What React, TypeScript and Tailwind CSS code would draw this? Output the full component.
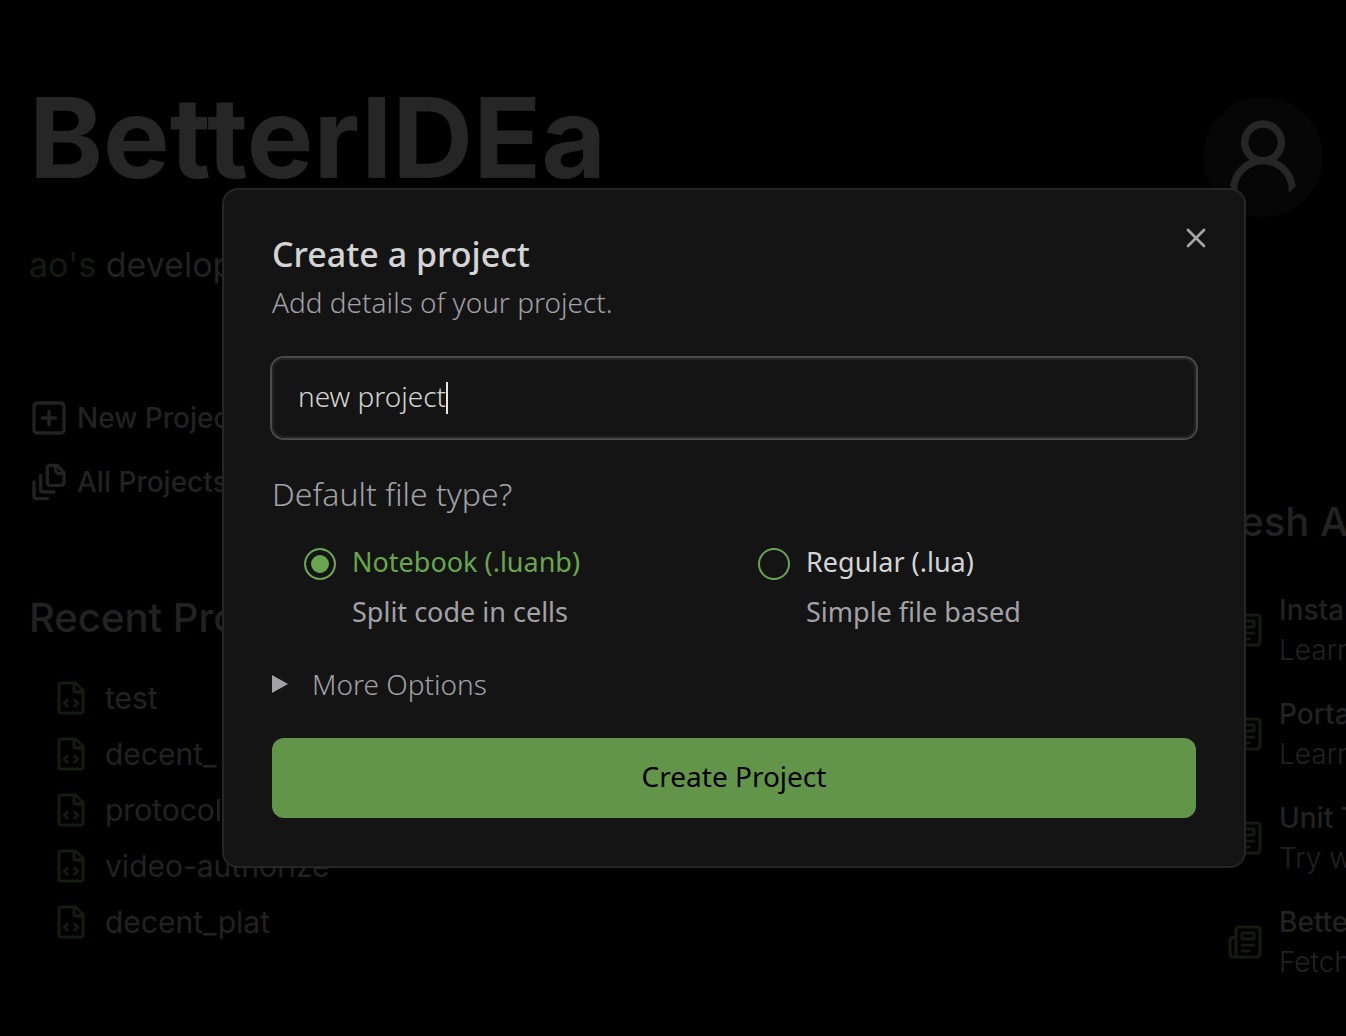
import { useState } from "react";
import { Newspaper, SquarePlus, X } from "lucide-react";

const recentProjects = ["test", "decent_", "protocol", "video-authorize", "decent_plat"];

const announcements = [
  { title: "Installing", text: "Learn more" },
  { title: "Portable", text: "Learn more" },
  { title: "Unit Testing", text: "Try writing" },
  { title: "BetterIDEa", text: "Fetching" },
];

const fileTypes = [
  { value: "luanb", label: "Notebook (.luanb)", hint: "Split code in cells" },
  { value: "lua", label: "Regular (.lua)", hint: "Simple file based" },
];

const stroke = {
  viewBox: "0 0 24 24",
  fill: "none",
  stroke: "currentColor",
  strokeWidth: 2,
  strokeLinecap: "round" as const,
  strokeLinejoin: "round" as const,
  "aria-hidden": true,
};

function FileStackIcon() {
  return (
    <svg {...stroke} className="size-10 shrink-0">
      <path d="M16 2v3a2 2 0 0 0 2 2h3" />
      <path d="M21 6.5v6c0 .8-.7 1.5-1.5 1.5h-7c-.8 0-1.5-.7-1.5-1.5v-9c0-.8.7-1.5 1.5-1.5H17Z" />
      <path d="M7 8v8.8c0 .3.2.6.4.8.2.2.5.4.8.4H15" />
      <path d="M3 12v8.8c0 .3.2.6.4.8.2.2.5.4.8.4H11" />
    </svg>
  );
}

function FileCodeIcon() {
  return (
    <svg {...stroke} className="size-9 shrink-0 text-[#141c0f]">
      <path d="m9.5 13.5-2 2 2 2" />
      <path d="m14.5 13.5 2 2-2 2" />
      <path d="M14 2v5a1 1 0 0 0 1 1h5" />
      <path d="M15 2H5.5A1.5 1.5 0 0 0 4 3.5v17A1.5 1.5 0 0 0 5.5 22h13a1.5 1.5 0 0 0 1.5-1.5V7Z" />
    </svg>
  );
}

function CreateProjectDialog() {
  const [name, setName] = useState("new project");
  const [fileType, setFileType] = useState("luanb");

  return (
    <div className="absolute inset-0 flex items-start justify-center pt-[188px] pl-[122px]">
      <form
        role="dialog"
        aria-labelledby="dialog-title"
        onSubmit={(e) => e.preventDefault()}
        className="relative flex w-full max-w-5xl flex-col gap-8 rounded-2xl border-2 border-[#262626] bg-[#141414] p-12 font-['Noto_Sans',sans-serif] text-[#a1a1a6]"
      >
        <button type="button" aria-label="Close" className="absolute top-8 right-8 text-[#a6a6a6]">
          <X size={32} aria-hidden />
        </button>
        <header>
          <h2 id="dialog-title" className="text-[34px] leading-8 font-medium text-[#d4d4d4]">
            Create a project
          </h2>
          <p className="mt-3 mb-1 text-[28px] leading-10 font-light">Add details of your project.</p>
        </header>
        <div className="relative">
          <input
            aria-label="Project name"
            value={name}
            onChange={(e) => setName(e.target.value)}
            className="h-20 w-full rounded-xl border-2 border-[#222222] bg-transparent px-6 pb-1 text-[28px] font-light text-[#d4d4d4] caret-transparent ring-2 ring-[#4a4a4a] outline-none"
          />
          <span aria-hidden className="absolute top-6 left-[174px] h-8 w-0.5 bg-[#e5e5e5]" />
        </div>
        <fieldset>
          <legend className="text-[32px] leading-12 font-light">Default file type?</legend>
          <div className="mt-6 grid grid-cols-2 gap-4 pl-8">
            {fileTypes.map((t) => (
              <label key={t.value} className="flex gap-4 text-[27px] leading-10">
                <input
                  type="radio"
                  name="fileType"
                  checked={fileType === t.value}
                  onChange={() => setFileType(t.value)}
                  className="peer mt-1.5 size-8 shrink-0 appearance-none rounded-full border-2 border-[#6aa352] checked:bg-[#69a54f] checked:shadow-[inset_0_0_0_5px_#141414]"
                />
                <span className="flex flex-col gap-2.5 text-[#d4d4d4] peer-checked:text-[#69a54f]">
                  <span>{t.label}</span>
                  <span className="text-[#a1a1a6]">{t.hint}</span>
                </span>
              </label>
            ))}
          </div>
        </fieldset>
        <details>
          <summary className="mb-0.5 flex list-none items-center gap-6 text-[28px] leading-10 font-light">
            <svg viewBox="0 0 16 18" className="h-[18px] w-4" fill="currentColor" aria-hidden>
              <path d="M0 0 16 9 0 18Z" />
            </svg>
            More Options
          </summary>
        </details>
        <button type="submit" className="h-20 rounded-xl bg-[#629449] pb-1 text-[28px] text-black">
          Create Project
        </button>
      </form>
    </div>
  );
}

export default function App() {
  return (
    <div className="relative min-h-screen overflow-hidden bg-black font-[Inter,sans-serif] text-[#222222]">
      <main className="pt-[77px] pr-[23px] pb-14 pl-[29px]">
        <header className="flex items-start justify-between">
          <h1 className="text-[112px] leading-[120px] font-bold text-[#262626]">BetterIDEa</h1>
          <div className="mt-5 flex size-[120px] items-center justify-center rounded-full bg-[#060606]">
            <svg
              viewBox="0 0 24 24"
              className="size-22 overflow-hidden rounded-full text-[#262626]"
              fill="none"
              stroke="currentColor"
              strokeWidth={2}
              aria-label="Account"
            >
              <circle cx="12" cy="8" r="5" />
              <path d="M20 22v-1a8 8 0 0 0-16 0v1" />
            </svg>
          </div>
        </header>
        <p className="mt-6 text-[34px] leading-12">
          <span className="text-[#141c0f]">ao's</span> developer
        </p>
        <div className="mt-px flex justify-between whitespace-nowrap">
          <div>
            <nav className="mt-[108px] flex flex-col items-start gap-6 text-[28px] leading-10 font-medium">
              <a href="#new" className="flex items-center gap-2">
                <SquarePlus size={40} aria-hidden />
                New Project
              </a>
              <a href="#all" className="flex items-center gap-2">
                <FileStackIcon />
                All Projects
              </a>
            </nav>
            <section>
              <h2 className="mt-[92px] text-[40px] leading-12 font-medium">Recent Projects</h2>
              <ul className="mt-9 flex flex-col gap-4 pl-6 text-[30px] leading-10">
                {recentProjects.map((p) => (
                  <li key={p}>
                    <a href={"#" + p} className="flex items-center gap-4">
                      <FileCodeIcon />
                      {p}
                    </a>
                  </li>
                ))}
              </ul>
            </section>
          </div>
          <section className="mt-52 w-[120px]">
            <h2 className="text-[40px] leading-12 font-medium">Fresh Announcements</h2>
            <ul className="mt-11 flex flex-col gap-6 pl-6 text-[28px] leading-10">
              {announcements.map((a) => (
                <li key={a.title} className="flex items-center gap-4">
                  <Newspaper size={36} className="shrink-0 text-[#141c0f]" aria-hidden />
                  <div>
                    <h3 className="font-medium">{a.title}</h3>
                    <p className="font-light">{a.text}</p>
                  </div>
                </li>
              ))}
            </ul>
          </section>
        </div>
      </main>
      <CreateProjectDialog />
    </div>
  );
}
